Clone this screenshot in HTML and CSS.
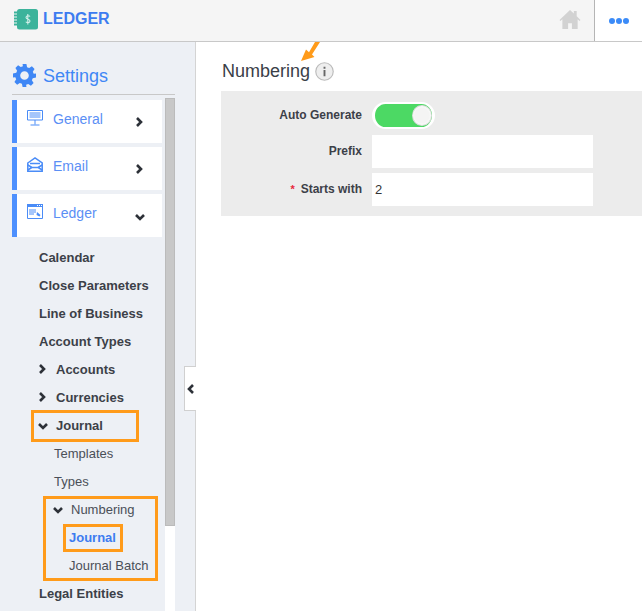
FILE: index.html
```html
<!DOCTYPE html>
<html lang="en">
<head>
<meta charset="utf-8">
<title>Ledger Numbering</title>
<link rel="stylesheet" href="styles.css">
</head>
<body>
<header class="topbar">
  <div class="brand">
    <svg class="brand-icon" viewBox="0 0 26 22" width="26" height="22">
      <rect x="4" y="1" width="21" height="20.500" rx="2.500" fill="#3cb39b"/>
      <path d="M1 4.500h4M1 7.500h4M1 10.500h4M1 13.500h4M1 16.500h4" stroke="#3cb39b" stroke-width="1.800"/>
      <path d="M17 8.500c-.5-1-4-1.400-4 .9 0 2.300 4 1.400 4 3.700 0 2.100-3.500 1.800-4.200.7M14.800 6v10.500" stroke="#d5f0ea" stroke-width="1.100" fill="none"/>
    </svg>
    <span class="brand-name">LEDGER</span>
  </div>
  <div class="top-actions">
    <div class="home-cell">
      <svg viewBox="0 0 24 22" width="24" height="21"><path d="M12 1 1 11.500l1 1L4 10.800V21h6v-6h4v6h6V10.800l2 1.700 1-1L19 7.500V2h-3v2.700z" fill="#d2d2d2"/></svg>
    </div>
    <div class="more-cell"><i></i><i></i><i></i></div>
  </div>
</header>
<div class="body-row">
  <aside class="sidebar">
    <h2 class="settings-title">
      <svg viewBox="0 0 24 24" width="23" height="23"><path fill-rule="evenodd" d="M10 0h4l.7 3.300 2.200.9 2.800-1.800 2.800 2.800-1.800 2.800.9 2.200L24 10v4l-3.400.8-.9 2.200 1.800 2.800-2.800 2.800-2.800-1.800-2.200.9L14 24h-4l-.7-3.300-2.200-.9-2.800 1.800-2.800-2.800 1.800-2.800-.9-2.200L0 14v-4l3.400-.8.900-2.200-1.800-2.800 2.800-2.800 2.800 1.800 2.200-.9zM12 7.500a4.500 4.500 0 1 0 0 9 4.500 4.500 0 0 0 0-9z" fill="#3f87f5"/></svg>
      <span>Settings</span>
    </h2>
    <div class="side-scroll">
      <nav class="side-list">
        <a class="card">
          <svg class="card-icon" viewBox="0 0 16 16" width="16" height="16"><path d="M.5.500h15v9.500H.5zM2.500 3h11M2.500 5h11M2.500 7h11M8 10v4.500M3.500 15h9" stroke="#4a8cf7" fill="none"/></svg>
          <span class="card-label">General</span>
          <svg class="chev card-chev" viewBox="0 0 10 10" width="10" height="10"><path d="M3 1l4 4-4 4" /></svg>
        </a>
        <a class="card">
          <svg class="card-icon" viewBox="0 0 16 16" width="16" height="16"><path d="M.8 6 8 1l7.200 5v8.200H.8z" stroke="#4a8cf7" stroke-width="1.500" fill="none"/><path d="M3 6.500h10M.8 8l4.200 2.500h6L15.200 8M.8 13l4-2.500M15.200 13l-4-2.500" stroke="#4a8cf7" stroke-width="1.500" fill="none"/></svg>
          <span class="card-label">Email</span>
          <svg class="chev card-chev" viewBox="0 0 10 10" width="10" height="10"><path d="M3 1l4 4-4 4" /></svg>
        </a>
        <a class="card">
          <svg class="card-icon" viewBox="0 0 16 15" width="16" height="15"><path d="M.5.500h15v14H.5z" stroke="#4a8cf7" fill="none"/><path d="M0 0h16v3H0z" fill="#4a8cf7"/><path d="M10 1h1v1h-1zM12 1h1v1h-1zM14 1h1v1h-1z" fill="#fff"/><path d="M2 6h7M2 8h7M2 10h5" stroke="#4a8cf7"/><path d="M10 8l3.500 3-1 1.500-3-1.500z" fill="#4a8cf7"/></svg>
          <span class="card-label">Ledger</span>
          <svg class="chev card-chev" viewBox="0 0 10 10" width="10" height="10"><path d="M2 4l4 4 4-4" /></svg>
        </a>
        <ul class="tree">
          <li class="tree-item">Calendar</li>
          <li class="tree-item">Close Parameters</li>
          <li class="tree-item">Line of Business</li>
          <li class="tree-item">Account Types</li>
          <li class="tree-item has-chev"><svg class="chev" viewBox="0 0 10 10" width="10" height="10"><path d="M3 1l4 4-4 4" /></svg>Accounts</li>
          <li class="tree-item has-chev"><svg class="chev" viewBox="0 0 10 10" width="10" height="10"><path d="M3 1l4 4-4 4" /></svg>Currencies</li>
          <li class="tree-item has-chev"><svg class="chev" viewBox="0 0 10 10" width="10" height="10"><path d="M2 4l4 4 4-4" /></svg>Journal<span class="mark mark-journal"></span></li>
          <li class="sub-item">Templates</li>
          <li class="sub-item">Types</li>
          <li class="sub-item has-chev"><svg class="chev" viewBox="0 0 10 10" width="10" height="10"><path d="M2 4l4 4 4-4" /></svg>Numbering<span class="mark mark-numbering"></span></li>
          <li class="leaf-item active">Journal<span class="mark mark-leaf"></span></li>
          <li class="leaf-item">Journal Batch</li>
          <li class="tree-item">Legal Entities</li>
        </ul>
      </nav>
      <div class="scrollbar"><div class="thumb"></div></div>
    </div>
    <button class="collapse" type="button" aria-label="Collapse"><svg class="chev" viewBox="0 0 10 10" width="10" height="10"><path d="M7 1 3 5l4 4" /></svg></button>
  </aside>
  <main class="content">
    <svg class="pointer" viewBox="0 0 20 20" width="20" height="20"><path d="M0 19 5 7.500l3 2.800L14 0h5L11 12.500l2.500 2.500z" fill="#ff9b1a"/></svg>
    <h1 class="page-title">Numbering
      <svg class="info" viewBox="0 0 20 20" width="19" height="19"><circle cx="10" cy="10" r="9.200" fill="#eee" stroke="#bbb" stroke-width="1.200"/><path d="M9 5h2v2H9zM9 8.500h2V15H9z" fill="#666"/></svg>
    </h1>
    <form class="panel">
      <div class="row row-toggle">
        <label class="row-label">Auto Generate</label>
        <span class="toggle"><span class="knob"></span></span>
      </div>
      <div class="row row-prefix">
        <label class="row-label">Prefix</label>
        <div class="field"></div>
      </div>
      <div class="row row-start">
        <label class="row-label"><span class="req">*</span>Starts with</label>
        <div class="field">2</div>
      </div>
    </form>
  </main>
</div>
</body>
</html>
```
FILE: styles.css
```css
* { box-sizing: border-box; }
html, body { margin: 0; height: 100%; overflow: hidden; }
body { font-family: "Liberation Sans", Arial, sans-serif; color: #333; background: #fff; display: flex; flex-direction: column; }

.topbar { height: 42px; flex: none; background: #f5f5f5; border-bottom: 1px solid #c8c8c8; display: flex; justify-content: space-between; }
.brand { display: flex; align-items: center; padding-left: 13px; gap: 4px; height: 37px; }
.brand-name { font-size: 16px; font-weight: 700; color: #3d7cf0; }
.top-actions { display: flex; }
.home-cell { width: 54px; display: flex; justify-content: center; align-items: center; padding: 0 0 3px 6px; }
.more-cell { width: 48px; background: #fff; border-left: 1px solid #b5b5b5; display: flex; align-items: center; justify-content: center; gap: 1px; }
.more-cell i { width: 6px; height: 6px; border-radius: 50%; background: #3b8bf8; }

.body-row { flex: 1; display: flex; min-height: 0; }
.sidebar { position: relative; width: 196px; flex: none; background: #edf0f5; border-right: 1px solid #d4d4d4; padding: 22px 0 0 12px; }
.settings-title { margin: 0; width: 163px; height: 31px; border-bottom: 1px solid #c8c8c8; display: flex; align-items: flex-start; gap: 7px; font-size: 18px; font-weight: 400; color: #3f87f5; line-height: 24px; }
.settings-title svg { flex: none; margin: 0 0 0 1px; }

.side-scroll { display: flex; gap: 3px; width: 163px; margin-top: 3px; height: 520px; }
.side-list { width: 150px; flex: none; padding-top: 2px; }
.scrollbar { width: 10px; flex: none; background: #fff; height: 520px; }
.thumb { height: 428px; background: #c8c8c8; border: 1px solid #bbb; }

.card { height: 43px; margin-bottom: 4px; background: #fff; border-left: 5px solid #4d90fe; display: flex; align-items: flex-start; position: relative; }
.card-icon { margin: 10px 0 0 10px; flex: none; }
.card-label { margin: 10px 0 0 10px; font-size: 14px; line-height: 18px; color: #5b8ff5; }
.card-chev { position: absolute; left: 117px; top: 17px; }
.chev { flex: none; overflow: visible; }
.chev path { fill: none; stroke: #2d3138; stroke-width: 2.600; }

.tree { list-style: none; margin: 6px 0 0; padding: 0; }
.tree-item, .sub-item, .leaf-item { position: relative; height: 28px; display: flex; align-items: center; font-size: 13px; white-space: nowrap; }
.tree-item { padding-left: 27px; font-weight: 700; color: #3c4048; }
.tree-item.has-chev { padding-left: 25px; gap: 9px; }
.sub-item { padding-left: 42px; color: #4a4f58; }
.sub-item.has-chev { padding-left: 40px; gap: 9px; }
.leaf-item { padding-left: 57px; color: #4a4f58; }
.leaf-item.active { font-weight: 700; color: #3d7cf0; }

.mark { position: absolute; border: 3px solid #ff9b1a; pointer-events: none; }
.mark-journal { left: 19px; top: -1px; width: 108px; height: 32px; }
.mark-numbering { left: 31px; top: 1px; width: 115px; height: 85px; }
.mark-leaf { left: 51px; top: 1px; width: 60px; height: 28px; }

.collapse { position: absolute; left: 184px; top: 324px; width: 12px; height: 45px; padding: 0; background: #fff; border: 1px solid #d0d0d0; border-right: 0; display: flex; align-items: center; justify-content: center; }

.content { position: relative; flex: 1; min-width: 0; padding: 17px 0 0 25px; }
.pointer { position: absolute; left: 105px; top: 0; }
.page-title { margin: 0 0 0 1px; display: flex; align-items: center; gap: 5px; font-size: 18px; font-weight: 400; line-height: 24px; color: #3a4048; }
.panel { margin: 8px 0 0 0; height: 125px; background: #ececec; padding-top: 11px; }
.row { display: flex; align-items: center; }
.row-label { position: relative; top: -1px; width: 141px; text-align: right; font-size: 12px; font-weight: 700; color: #3c4048; }
.req { color: #e8263b; font-size: 11px; margin-right: 6px; }
.row-toggle { height: 27px; margin-bottom: 6px; }
.row-prefix { height: 33px; margin-bottom: 5px; }
.row-start { height: 33px; }
.field { margin-left: 10px; width: 221px; height: 33px; background: #fff; padding: 9px 3px 0; font-size: 13px; line-height: 15px; color: #333; }
.toggle { margin-left: 10px; width: 63px; height: 27px; border-style: solid; border-width: 2px 3px; border-color: #fff; background: #4cd964; border-radius: 14px; position: relative; display: block; }
.knob { position: absolute; right: 0; top: 1px; width: 20px; height: 21px; border-radius: 50%; background: radial-gradient(circle, #f4f4f4 55%, #fff 80%); border: 1px solid #ddd; }
```
